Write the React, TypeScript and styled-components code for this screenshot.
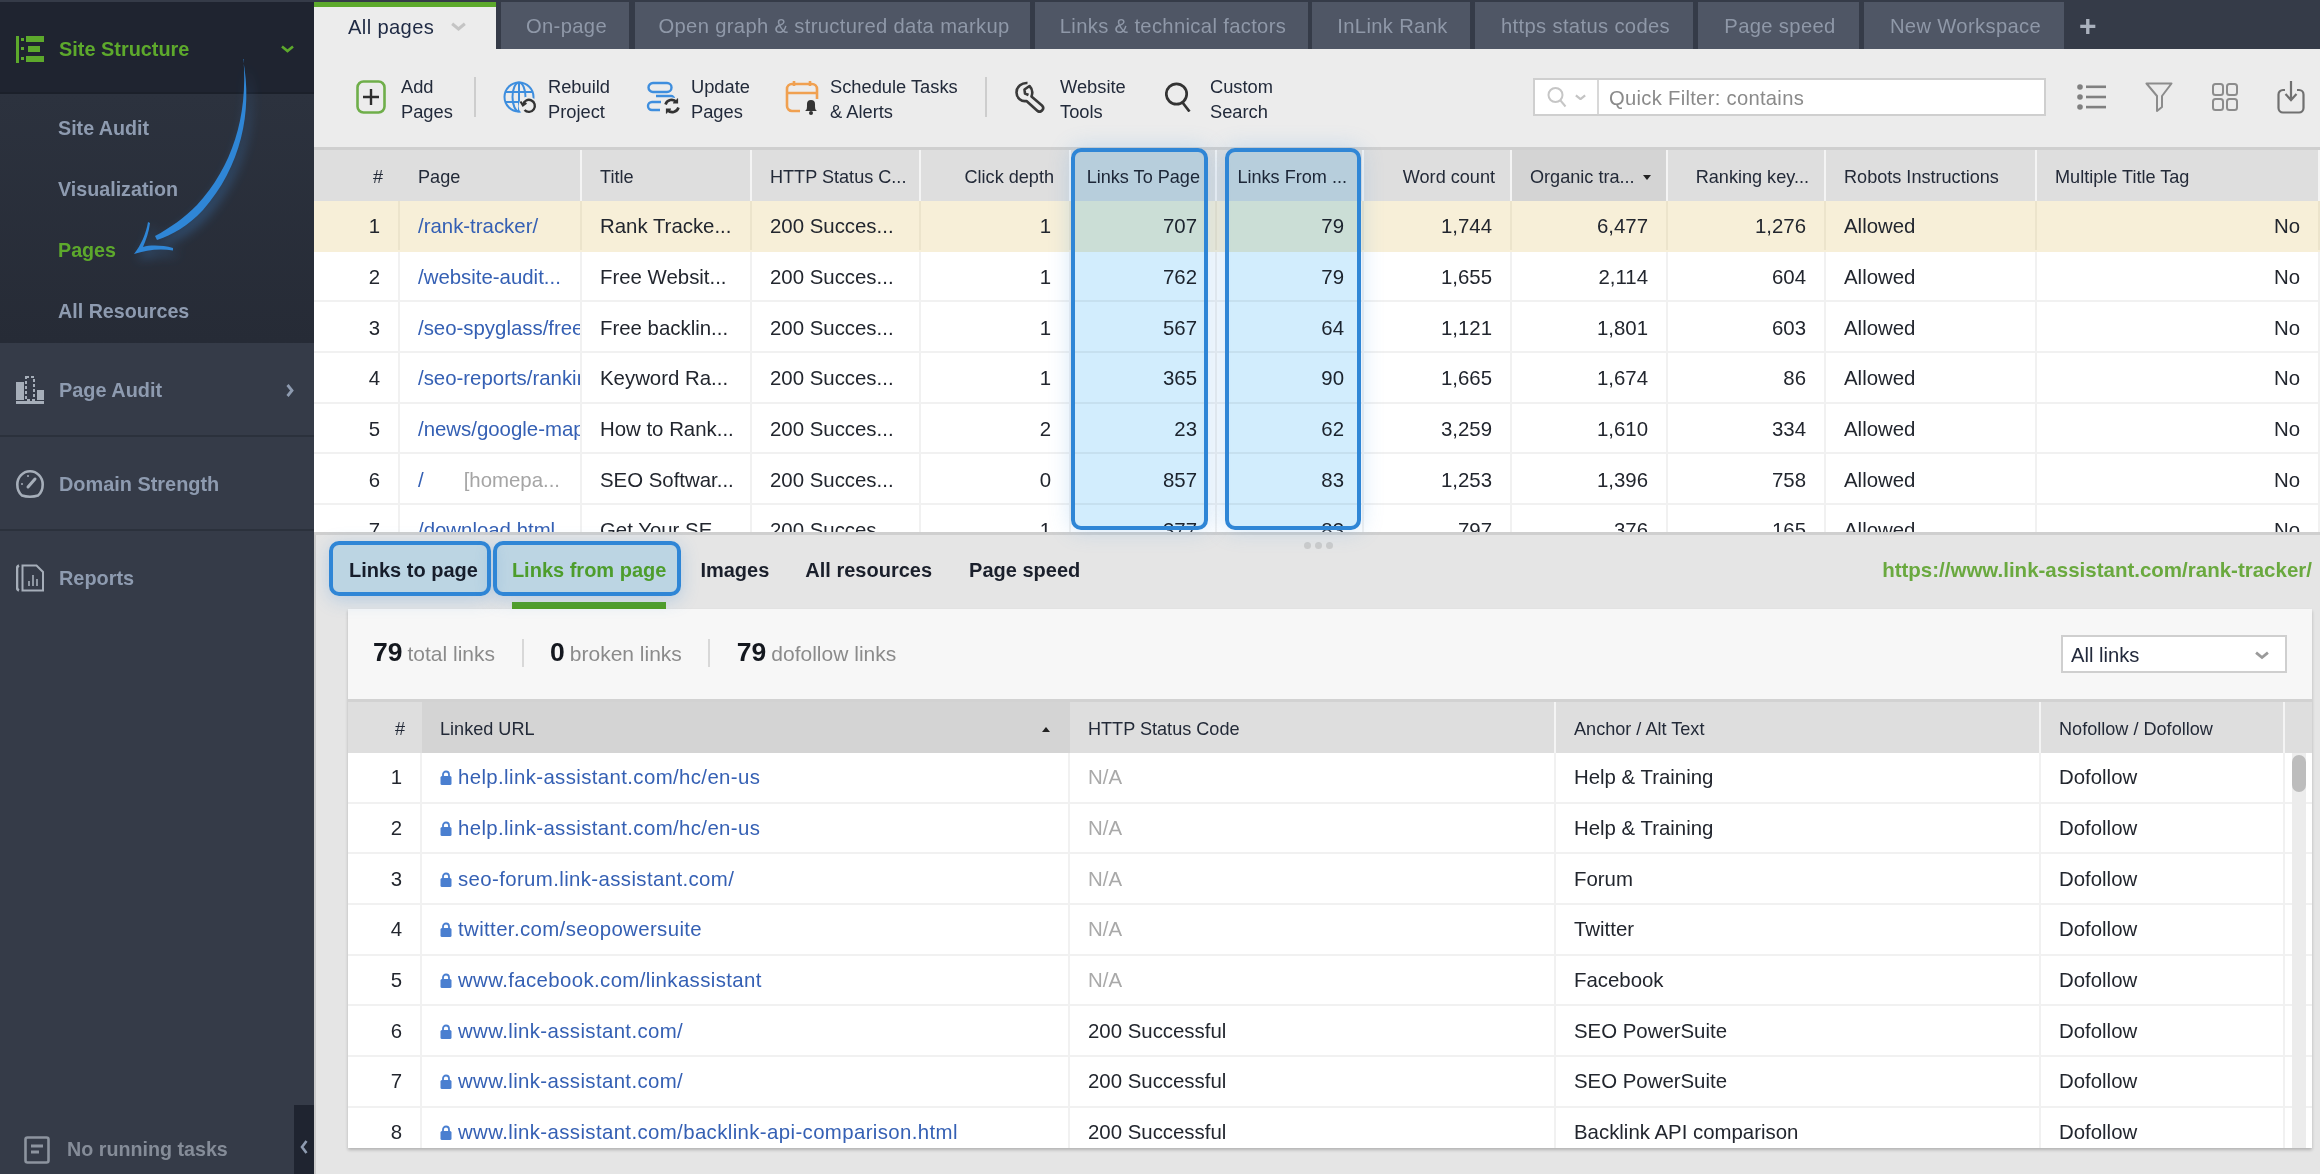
import React from "react";
import styled, { createGlobalStyle } from "styled-components";

const Global = createGlobalStyle`
  html, body { margin: 0; padding: 0; background: #e5e5e5; }
  body { font-family: "Liberation Sans", Arial, sans-serif; color: #1c1c1c; }
  * { box-sizing: border-box; }
`;

const Shell = styled.div`
  display: flex;
  width: 2320px;
  height: 1174px;
  overflow: hidden;
  position: relative;
`;

/* ---------- sidebar ---------- */
const Sidebar = styled.aside`
  width: 314px;
  flex: none;
  background: #353b48;
  border-top: 2px solid #353b48;
  display: flex;
  flex-direction: column;
  position: relative;
`;
const NavHead = styled.div<{ $active?: boolean; $last?: boolean }>`
  height: ${(p) => (p.$active ? "92px" : "94px")};
  flex: none;
  display: flex;
  align-items: center;
  padding: ${(p) => (p.$active ? "4px" : "2px")} 20px 0 16px;
  background: ${(p) => (p.$active ? "#1f2430" : "transparent")};
  color: ${(p) => (p.$active ? "#5da92c" : "#8e9bb0")};
  border-bottom: 2px solid ${(p) => (p.$active ? "#1b202a" : p.$last ? "transparent" : "#2b313c")};
  font-size: 19.9px;
  font-weight: 700;
  svg.ico { width: 28px; height: 28px; margin-right: 15px; flex: none; }
  svg.caret { margin-left: auto; flex: none; }
`;
const SubNav = styled.div`
  height: 249px;
  flex: none;
  padding-top: 4px;
  background: linear-gradient(#2c323e, #262b36);
`;
const SubItem = styled.div<{ $active?: boolean }>`
  height: 61px;
  display: flex;
  align-items: center;
  padding-left: 58px;
  font-size: 19.7px;
  font-weight: 700;
  color: ${(p) => (p.$active ? "#5da92c" : "#8e9bb0")};
`;
const TaskLine = styled.div`
  margin-top: auto;
  height: 69px;
  display: flex;
  align-items: center;
  padding: 20px 0 0 24px;
  color: #858c98;
  font-size: 19.7px;
  font-weight: 700;
  svg { margin-right: 17px; }
`;
const Collapse = styled.div`
  position: absolute;
  right: 0;
  bottom: 0;
  width: 20px;
  height: 69px;
  background: #1f2430;
  color: #8e9bb0;
  display: flex;
  align-items: center;
  justify-content: center;
  padding-top: 14px;
`;
const ArrowLayer = styled.svg`
  position: absolute;
  left: 0;
  top: 0;
  width: 314px;
  height: 300px;
  pointer-events: none;
`;

/* ---------- main ---------- */
const Main = styled.main`
  flex: 1;
  min-width: 0;
  display: flex;
  flex-direction: column;
  position: relative;
`;
const TabBar = styled.div`
  height: 49px;
  flex: none;
  display: flex;
  align-items: stretch;
  padding-top: 2px;
  background: #353b48;
`;
const Tab = styled.div<{ $w: number; $gap: number; $active?: boolean }>`
  width: ${(p) => p.$w}px;
  margin-right: ${(p) => p.$gap}px;
  flex: none;
  display: flex;
  align-items: center;
  justify-content: ${(p) => (p.$active ? "flex-start" : "center")};
  padding: ${(p) => (p.$active ? "0 0 2px 34px" : "1px 0 0 3px")};
  background: ${(p) => (p.$active ? "#ececec" : "#4f5665")};
  border-top: ${(p) => (p.$active ? "5px solid #5da92c" : "0")};
  color: ${(p) => (p.$active ? "#1f2a44" : "#8f98a8")};
  font-size: 20.2px;
  letter-spacing: 0.35px;
  svg { margin-left: 17px; }
`;
const AddTab = styled.div`
  color: #aab1bd;
  font-size: 30px;
  font-weight: 700;
  line-height: 47px;
  margin-left: 15px;
`;
const Toolbar = styled.div`
  height: 101px;
  flex: none;
  display: flex;
  align-items: center;
  padding: 0 0 2px 42px;
  background: #ececec;
  border-bottom: 3px solid #cfcfcf;
`;
const ToolButton = styled.div<{ $w: number }>`
  width: ${(p) => p.$w}px;
  flex: none;
  display: flex;
  align-items: center;
`;
const ToolIcon = styled.span`
  width: 45px;
  flex: none;
  display: flex;
  svg { display: block; }
`;
const ToolLabel = styled.div`
  font-size: 18.3px;
  line-height: 25px;
  padding-top: 3px;
  color: #222a3a;
  white-space: nowrap;
`;
const ToolSep = styled.span<{ $after: number }>`
  width: 2px;
  height: 40px;
  flex: none;
  background: #cdcdcd;
  margin-right: ${(p) => p.$after}px;
`;
const QuickFilter = styled.div`
  width: 513px;
  height: 38px;
  flex: none;
  display: flex;
  background: #fff;
  border: 2px solid #cfcfcf;
`;
const FilterScope = styled.div`
  width: 64px;
  flex: none;
  border-right: 2px solid #d8d8d8;
  display: flex;
  align-items: center;
  justify-content: center;
  gap: 8px;
`;
const FilterInput = styled.div`
  flex: 1;
  display: flex;
  align-items: center;
  padding: 3px 0 0 10px;
  color: #8a8a8a;
  font-size: 20.2px;
  letter-spacing: 0.3px;
`;
const ViewButton = styled.div<{ $w: number; $first?: boolean }>`
  width: ${(p) => p.$w}px;
  margin-left: ${(p) => (p.$first ? 11 : 0)}px;
  flex: none;
  display: flex;
  justify-content: center;
`;

/* ---------- tables ---------- */
const UPPER = "86px 182px 170px 169px 150px 146px 147px 148px 156px 158px 211px 283px";
const LOWER = "74px 648px 486px 485px 244px 1fr";

const HeadRow = styled.div<{ $cols: string; $h: number }>`
  display: grid;
  grid-template-columns: ${(p) => p.$cols};
  height: ${(p) => p.$h}px;
  background: #dedede;
`;
const HeadCell = styled.div<{ $right?: boolean; $sorted?: boolean; $plain?: boolean }>`
  display: flex;
  align-items: center;
  justify-content: ${(p) => (p.$right ? "flex-end" : "flex-start")};
  padding: 3px ${(p) => (p.$right ? "15px" : "18px")} 0 18px;
  gap: 8px;
  background: ${(p) => (p.$sorted ? "#d4d4d4" : "transparent")};
  border-right: 2px solid ${(p) => (p.$plain ? "transparent" : "#f4f4f4")};
  color: #232a38;
  font-size: 18.1px;
  white-space: nowrap;
  overflow: hidden;
`;
const SortDown = styled.span`
  width: 0;
  height: 0;
  margin-left: auto;
  border-left: 4px solid transparent;
  border-right: 4px solid transparent;
  border-top: 5px solid #222;
`;
const SortUp = styled.span`
  width: 0;
  height: 0;
  margin-left: auto;
  border-left: 4px solid transparent;
  border-right: 4px solid transparent;
  border-bottom: 5px solid #222;
`;
const BodyRow = styled.div<{ $cols: string; $selected?: boolean }>`
  display: grid;
  grid-template-columns: ${(p) => p.$cols};
  height: 50.7px;
  background: ${(p) => (p.$selected ? "#f7efd8" : "#fff")};
  border-bottom: 2px solid ${(p) => (p.$selected ? "#f7efd8" : "#f1f1f1")};
  --sep: ${(p) => (p.$selected ? "#ece4cc" : "#f1f1f1")};
`;
const Cell = styled.div<{ $right?: boolean; $link?: boolean; $muted?: boolean }>`
  display: flex;
  align-items: center;
  justify-content: ${(p) => (p.$right ? "flex-end" : "flex-start")};
  padding: 1px 18px 0;
  border-right: 2px solid var(--sep);
  color: ${(p) => (p.$link ? "#3560b4" : p.$muted ? "#a9a9a9" : "#22262e")};
  font-size: 20.4px;
  white-space: nowrap;
  overflow: hidden;
`;
const UpperTable = styled.section`
  height: 382px;
  flex: none;
  overflow: hidden;
  background: #fff;
  ${Cell} { padding-top: 3px; }
`;
const Hint = styled.span`
  color: #a5a5a5;
  margin-left: 40px;
`;

/* ---------- lower panel ---------- */
const LowerPanel = styled.section`
  flex: 1;
  min-height: 0;
  display: flex;
  flex-direction: column;
  background: #e5e5e5;
  border-top: 3px solid #cfcfcf;
  border-left: 2px solid #cbcbcb;
  position: relative;
`;
const LowerTabs = styled.div`
  height: 74px;
  flex: none;
  display: flex;
  align-items: stretch;
  padding: 0 8px 0 33px;
`;
const LowerTab = styled.div<{ $active?: boolean; $gap?: number }>`
  display: flex;
  align-items: center;
  margin-right: ${(p) => p.$gap ?? 34}px;
  padding-top: 4px;
  font-size: 20px;
  font-weight: 700;
  color: ${(p) => (p.$active ? "#5da92c" : "#1a1f2b")};
  border-bottom: 7px solid ${(p) => (p.$active ? "#529f1f" : "transparent")};
`;
const PageUrl = styled.div`
  margin-left: auto;
  display: flex;
  align-items: center;
  padding-bottom: 5px;
  color: #6aa93f;
  font-size: 20.5px;
  font-weight: 700;
`;
const Dots = styled.div`
  position: absolute;
  left: 988px;
  top: 7px;
  display: flex;
  gap: 4px;
  span { width: 7px; height: 7px; border-radius: 50%; background: #cbcbcb; }
`;
const Card = styled.div`
  height: 539px;
  flex: none;
  margin: 0 8px 0 32px;
  background: #fff;
  display: flex;
  flex-direction: column;
  overflow: hidden;
  box-shadow: 0 2px 3px rgba(0, 0, 0, 0.22);
`;
const Summary = styled.div`
  height: 93px;
  flex: none;
  display: flex;
  align-items: center;
  padding: 0 25px;
  background: #f7f7f7;
  border-bottom: 3px solid #d2d2d2;
`;
const Stat = styled.div<{ $last?: boolean }>`
  display: flex;
  align-items: baseline;
  gap: 5px;
  padding-right: 26.5px;
  margin-right: 26.5px;
  border-right: ${(p) => (p.$last ? "0" : "2px solid #d8d8d8")};
  color: #8b8b8b;
  font-size: 21px;
  line-height: 27px;
  margin-top: -3px;
  b { color: #14181f; font-size: 26.5px; }
`;
const LinkSelect = styled.div`
  margin-left: auto;
  width: 226px;
  height: 38px;
  display: flex;
  align-items: center;
  justify-content: space-between;
  padding: 3px 16px 0 8px;
  background: #fff;
  border: 2px solid #cfcfcf;
  font-size: 20.2px;
  color: #232a3c;
`;
const LowerBody = styled.div`
  flex: 1;
  min-height: 0;
  overflow: hidden;
  position: relative;
`;
const UrlText = styled.span`
  margin-left: 6px;
  letter-spacing: 0.38px;
`;
const Scrollbar = styled.div`
  position: absolute;
  right: 6px;
  top: 51px;
  bottom: 0;
  width: 14px;
  background: #ececec;
  &::before {
    content: "";
    position: absolute;
    inset: 2px 0 auto 0;
    height: 37px;
    border-radius: 7px;
    background: #bdbdbd;
  }
`;
const Highlight = styled.div<{ $l: number; $t: number; $w: number; $h: number }>`
  position: absolute;
  left: ${(p) => p.$l}px;
  top: ${(p) => p.$t}px;
  width: ${(p) => p.$w}px;
  height: ${(p) => p.$h}px;
  border: 4px solid #2f86d6;
  border-radius: 10px;
  box-shadow: 0 0 22px rgba(80, 160, 230, 0.25);
  pointer-events: none;
  &::before {
    content: "";
    position: absolute;
    inset: 0;
    border-radius: 6px;
    background: rgb(210, 237, 253);
    mix-blend-mode: multiply;
  }
`;
const TabHighlight = styled(Highlight)`
  box-shadow: 0 4px 18px rgba(60, 140, 215, 0.28);
`;

/* ---------- icons ---------- */
const green = "#5da92c";
const grey = "#8e9bb0";
const lgrey = "#a6aeb9";

const StructureIcon = () => (
  <svg className="ico" viewBox="0 0 28 28" fill={green}>
    <rect x="0" y="1" width="3" height="27" />
    <rect x="5" y="3" width="3" height="3" />
    <rect x="5" y="12" width="3" height="3" />
    <rect x="5" y="22" width="3" height="3" />
    <rect x="10" y="1" width="18" height="6" />
    <rect x="12" y="11" width="12" height="6" />
    <rect x="10" y="21" width="18" height="6" />
  </svg>
);
const AuditIcon = () => (
  <svg className="ico" viewBox="0 0 28 28" fill={lgrey}>
    <rect x="0" y="6" width="8" height="18" />
    <rect x="21" y="14" width="7" height="10" />
    <rect x="0" y="25" width="28" height="3" />
    <rect x="10" y="1" width="8" height="23" fill="none" stroke={lgrey} strokeWidth="2" strokeDasharray="3 2" />
  </svg>
);
const GaugeIcon = () => (
  <svg className="ico" viewBox="0 0 28 28" fill="none" stroke={lgrey} strokeWidth="2.6">
    <path d="M6 25.5C2.8 23 1.3 18.800 1.300 14.500 1.300 7.200 7 1.300 14 1.300s12.700 5.900 12.700 13.200c0 4.300-1.500 8.500-4.700 11 -2.300.8-5 1.200-8 1.200s-5.700-.4-8-1.200z" />
    <path d="M12 17l7-8" strokeWidth="3" strokeLinecap="round" />
    <circle cx="6" cy="14" r="1" fill={lgrey} stroke="none" />
    <circle cx="12" cy="6" r="1" fill={lgrey} stroke="none" />
  </svg>
);
const ReportIcon = () => (
  <svg className="ico" viewBox="0 0 28 28" fill="none" stroke={lgrey} strokeWidth="2">
    <path d="M3 1.500C1.700 2 1 3 1 4.500v19c0 1.500.7 2.500 2 3" strokeWidth="2.600" />
    <path d="M6.500 1.500h14l6.500 6.500v18.500h-20.500z" />
    <path d="M13 22v-5M17 22v-11M21 22v-7" strokeWidth="1.600" />
  </svg>
);
const TaskIcon = () => (
  <svg width="26" height="28" viewBox="0 0 26 28" fill="none" stroke="#8d949f" strokeWidth="2.600">
    <rect x="1.500" y="1.500" width="23" height="25" rx="2" />
    <path d="M7 10h12M7 16h8" strokeWidth="3" />
  </svg>
);
const CaretDown = ({ c = green, w = 13 }: { c?: string; w?: number }) => (
  <svg className="caret" width={w} height={w * 0.62} viewBox="0 0 13 8" fill="none" stroke={c} strokeWidth="2.600">
    <path d="M1 1.500l5.500 4.500 5.500-4.500" />
  </svg>
);
const CaretRight = () => (
  <svg className="caret" width="8" height="13" viewBox="0 0 8 13" fill="none" stroke={grey} strokeWidth="2.800">
    <path d="M1.500 1l4.500 5.500-4.500 5.500" />
  </svg>
);
const AddIcon = () => (
  <svg width="30" height="34" viewBox="0 0 30 34" fill="none">
    <rect x="1.500" y="1.500" width="27" height="31" rx="6" stroke="#6fae4a" strokeWidth="2.600" />
    <path d="M15 9v16M7 17h16" stroke="#2e2e2e" strokeWidth="2.400" />
  </svg>
);
const RebuildIcon = () => (
  <svg width="36" height="36" viewBox="0 -2 36 36" fill="none">
    <g stroke="#3e8ede" strokeWidth="2">
      <circle cx="16" cy="16" r="14.500" />
      <ellipse cx="16" cy="16" rx="6.500" ry="14.500" />
      <path d="M16 1.500v29M2 11h28M2 21h28" />
    </g>
    <circle cx="25" cy="25" r="9.500" fill="#ececec" />
    <path d="M20 23.500a6 6 0 1 1 1.500 5.500" stroke="#333" strokeWidth="2.400" />
    <path d="M17.500 20.500l2.400 4 3.500-2.600" stroke="#333" strokeWidth="2" />
  </svg>
);
const UpdateIcon = () => (
  <svg width="36" height="36" viewBox="0 -2 36 36" fill="none">
    <g stroke="#3e8ede" strokeWidth="2.400">
      <rect x="2.500" y="2" width="23" height="9" rx="4.500" />
      <path d="M10 15h15a3 3 0 0 1 0 6h-1M15 21H6a4 4 0 0 0 0 8h8" />
    </g>
    <circle cx="26" cy="25" r="8.500" fill="#ececec" />
    <path d="M19.500 23.500a6.500 6.500 0 0 1 11-2.500M32.500 26.500a6.500 6.500 0 0 1-11 2.500" stroke="#333" strokeWidth="2.600" />
    <path d="M31.500 17.500v4.500h-4.500M20.500 32.500v-4.500h4.500" fill="#333" stroke="#333" strokeWidth="1.200" />
  </svg>
);
const ScheduleIcon = () => (
  <svg width="36" height="36" viewBox="0 -1 36 36" fill="none">
    <path d="M15 31H7a5 5 0 0 1-5-5V9a5 5 0 0 1 5-5h20a5 5 0 0 1 5 5v10M2 13h30M9 1v5M25 1v5" stroke="#f0a050" strokeWidth="2.600" />
    <path d="M20 31c2-1 2-3 2-7a4 4 0 0 1 8 0c0 4 0 6 2 7z" fill="#333" />
    <circle cx="26" cy="33" r="2" fill="#333" />
  </svg>
);
const WrenchIcon = () => (
  <svg width="30" height="32" viewBox="0 0 30 32" fill="none" stroke="#3a3a3a" strokeWidth="2.600" strokeLinejoin="round">
    <path d="M12.500 2C7 1.500 1.500 5.500 1.500 11.500c0 5.500 5 9.500 10 8.500l10.500 9.500c1.500 1.500 3.500 1.500 5 0s1.500-3.500 0-5L16.500 15.500c1.500-4 .5-8-2-10.500l-5 3.500.5 4 3.500 1.500" />
  </svg>
);
const LensIcon = () => (
  <svg width="26" height="30" viewBox="0 0 26 30" fill="none" stroke="#333" strokeWidth="2.700">
    <circle cx="11.500" cy="12" r="10.200" />
    <path d="M17.500 20.500l7 9" />
  </svg>
);
const SmallLens = () => (
  <svg width="20" height="22" viewBox="0 0 20 22" fill="none" stroke="#c6c6c6" strokeWidth="2">
    <circle cx="8.500" cy="9" r="7" />
    <path d="M13.500 14.500l5 6" />
  </svg>
);
const ListIcon = () => (
  <svg width="30" height="28" viewBox="0 0 30 28" fill="#808080">
    <circle cx="3" cy="4" r="2.800" />
    <circle cx="3" cy="14" r="2.800" />
    <circle cx="3" cy="24" r="2.800" />
    <rect x="9" y="2.500" width="20" height="2.600" />
    <rect x="9" y="12.700" width="20" height="2.600" />
    <rect x="9" y="22.800" width="20" height="2.600" />
  </svg>
);
const FunnelIcon = () => (
  <svg width="28" height="30" viewBox="0 0 28 30" fill="none" stroke="#8c8c8c" strokeWidth="2">
    <path d="M1.500 1.500h25L17 14v11l-5 4V14z" strokeLinejoin="round" />
  </svg>
);
const GridIcon = () => (
  <svg width="26" height="28" viewBox="0 0 26 28" fill="none" stroke="#8c8c8c" strokeWidth="2">
    <rect x="1" y="1" width="10" height="11" rx="2.500" />
    <rect x="15" y="1" width="10" height="11" rx="2.500" />
    <rect x="1" y="16" width="10" height="11" rx="2.500" />
    <rect x="15" y="16" width="10" height="11" rx="2.500" />
  </svg>
);
const SaveIcon = () => (
  <svg width="28" height="34" viewBox="0 0 28 34" fill="none" stroke="#707070" strokeWidth="2.200">
    <path d="M8 10H6a4.500 4.500 0 0 0-4.500 4.500V28A4.500 4.500 0 0 0 6 32.500h16a4.500 4.500 0 0 0 4.500-4.500V14.500A4.500 4.500 0 0 0 22 10h-2" />
    <path d="M14 1v18M8.500 14l5.500 6 5.500-6" />
  </svg>
);
const LockIcon = () => (
  <svg width="12" height="15" viewBox="0 0 12 15" style={{ flex: "none" }}>
    <path d="M3 7V4.500a3 3 0 0 1 6 0V7" fill="none" stroke="#4a7fd0" strokeWidth="1.800" />
    <rect x="0.500" y="6" width="11" height="9" rx="1.500" fill="#4a7fd0" />
  </svg>
);

const Arrow = () => (
  <ArrowLayer viewBox="0 0 314 300">
    <defs>
      <filter id="glow" x="-40%" y="-40%" width="180%" height="180%">
        <feGaussianBlur stdDeviation="6" />
      </filter>
    </defs>
    <g fill="#3f8fe0" opacity="0.45" filter="url(#glow)" transform="translate(4 5)">
      <path d="M243 59C252 110 240 165 203 208 188 224 172 233 157 238L155 234C170 226 184 216 197 203 232 165 248 115 243 59Z" />
      <path d="M148 220C146 232 141 243 134 252 146 248 160 246 173 248L173 246C162 243 150 243 143 245 146 238 149 230 150 221Z" />
    </g>
    <g fill="#2f86d6">
      <path d="M243 57C253 110 241 165 203 208 188 224 172 233 157 238L155 234C170 226 184 216 197 203 232 165 248 115 243.500 57Z" />
      <path d="M148 220C146 232 141 243 134 252 146 248 160 246 173 248.500L173 246C162 243 150 243 143 245 146 238 149 230 150 221Z" />
    </g>
  </ArrowLayer>
);

/* ---------- data ---------- */
const tabs = [
  { t: "On-page", w: 128, g: 6 },
  { t: "Open graph & structured data markup", w: 395, g: 5 },
  { t: "Links & technical factors", w: 273, g: 4 },
  { t: "InLink Rank", w: 158, g: 5 },
  { t: "https status codes", w: 218, g: 5 },
  { t: "Page speed", w: 161, g: 5 },
  { t: "New Workspace", w: 200, g: 0 },
];
const pages: [string, string, string, string, string, string, string, string][] = [
  ["/rank-tracker/", "Rank Tracke...", "1", "707", "79", "1,744", "6,477", "1,276"],
  ["/website-audit...", "Free Websit...", "1", "762", "79", "1,655", "2,114", "604"],
  ["/seo-spyglass/free", "Free backlin...", "1", "567", "64", "1,121", "1,801", "603"],
  ["/seo-reports/ranking", "Keyword Ra...", "1", "365", "90", "1,665", "1,674", "86"],
  ["/news/google-map", "How to Rank...", "2", "23", "62", "3,259", "1,610", "334"],
  ["/", "SEO Softwar...", "0", "857", "83", "1,253", "1,396", "758"],
  ["/download.html", "Get Your SE", "1", "377", "83", "797", "376", "165"],
];
const links = [
  ["help.link-assistant.com/hc/en-us", "N/A", "Help & Training"],
  ["help.link-assistant.com/hc/en-us", "N/A", "Help & Training"],
  ["seo-forum.link-assistant.com/", "N/A", "Forum"],
  ["twitter.com/seopowersuite", "N/A", "Twitter"],
  ["www.facebook.com/linkassistant", "N/A", "Facebook"],
  ["www.link-assistant.com/", "200 Successful", "SEO PowerSuite"],
  ["www.link-assistant.com/", "200 Successful", "SEO PowerSuite"],
  ["www.link-assistant.com/backlink-api-comparison.html", "200 Successful", "Backlink API comparison"],
];

export default function App() {
  return (
    <Shell>
      <Global />
      <Sidebar>
        <NavHead $active>
          <StructureIcon />
          Site Structure
          <CaretDown />
        </NavHead>
        <SubNav>
          <SubItem>Site Audit</SubItem>
          <SubItem>Visualization</SubItem>
          <SubItem $active>Pages</SubItem>
          <SubItem>All Resources</SubItem>
        </SubNav>
        <NavHead>
          <AuditIcon />
          Page Audit
          <CaretRight />
        </NavHead>
        <NavHead>
          <GaugeIcon />
          Domain Strength
        </NavHead>
        <NavHead $last>
          <ReportIcon />
          Reports
        </NavHead>
        <TaskLine>
          <TaskIcon />
          No running tasks
        </TaskLine>
        <Collapse>
          <svg width="8" height="14" viewBox="0 0 8 14" fill="none" stroke={grey} strokeWidth="2.600">
            <path d="M6.500 1L2 7l4.500 6" />
          </svg>
        </Collapse>
        <Arrow />
      </Sidebar>

      <Main>
        <TabBar>
          <Tab $active $w={182} $gap={5}>
            All pages
            <CaretDown c="#c4c4c4" w={15} />
          </Tab>
          {tabs.map((t) => (
            <Tab key={t.t} $w={t.w} $gap={t.g}>
              {t.t}
            </Tab>
          ))}
          <AddTab>+</AddTab>
        </TabBar>

        <Toolbar>
          <ToolButton $w={118}>
            <ToolIcon><AddIcon /></ToolIcon>
            <ToolLabel>Add<br />Pages</ToolLabel>
          </ToolButton>
          <ToolSep $after={27} />
          <ToolButton $w={143}>
            <ToolIcon><RebuildIcon /></ToolIcon>
            <ToolLabel>Rebuild<br />Project</ToolLabel>
          </ToolButton>
          <ToolButton $w={139}>
            <ToolIcon><UpdateIcon /></ToolIcon>
            <ToolLabel>Update<br />Pages</ToolLabel>
          </ToolButton>
          <ToolButton $w={200}>
            <ToolIcon><ScheduleIcon /></ToolIcon>
            <ToolLabel>Schedule Tasks<br />&amp; Alerts</ToolLabel>
          </ToolButton>
          <ToolSep $after={28} />
          <ToolButton $w={150}>
            <ToolIcon><WrenchIcon /></ToolIcon>
            <ToolLabel>Website<br />Tools</ToolLabel>
          </ToolButton>
          <ToolButton $w={368}>
            <ToolIcon><LensIcon /></ToolIcon>
            <ToolLabel>Custom<br />Search</ToolLabel>
          </ToolButton>
          <QuickFilter>
            <FilterScope>
              <SmallLens />
              <CaretDown c="#c4c4c4" w={11} />
            </FilterScope>
            <FilterInput>Quick Filter: contains</FilterInput>
          </QuickFilter>
          <ViewButton $first $w={69}><ListIcon /></ViewButton>
          <ViewButton $w={66}><FunnelIcon /></ViewButton>
          <ViewButton $w={65}><GridIcon /></ViewButton>
          <ViewButton $w={67}><SaveIcon /></ViewButton>
        </Toolbar>

        <UpperTable>
          <HeadRow $cols={UPPER} $h={51}>
            <HeadCell $plain $right>#</HeadCell>
            <HeadCell>Page</HeadCell>
            <HeadCell>Title</HeadCell>
            <HeadCell>HTTP Status C...</HeadCell>
            <HeadCell $right>Click depth</HeadCell>
            <HeadCell $right>Links To Page</HeadCell>
            <HeadCell $right>Links From ...</HeadCell>
            <HeadCell $right>Word count</HeadCell>
            <HeadCell $sorted>Organic tra...<SortDown /></HeadCell>
            <HeadCell $right>Ranking key...</HeadCell>
            <HeadCell>Robots Instructions</HeadCell>
            <HeadCell>Multiple Title Tag</HeadCell>
          </HeadRow>
          {pages.map((r, i) => (
            <BodyRow key={i} $cols={UPPER} $selected={i === 0}>
              <Cell $right>{i + 1}</Cell>
              <Cell $link>
                {r[0]}
                {r[0] === "/" && <Hint>[homepa...</Hint>}
              </Cell>
              <Cell>{r[1]}</Cell>
              <Cell>200 Succes...</Cell>
              <Cell $right>{r[2]}</Cell>
              <Cell $right>{r[3]}</Cell>
              <Cell $right>{r[4]}</Cell>
              <Cell $right>{r[5]}</Cell>
              <Cell $right>{r[6]}</Cell>
              <Cell $right>{r[7]}</Cell>
              <Cell>Allowed</Cell>
              <Cell $right>No</Cell>
            </BodyRow>
          ))}
        </UpperTable>

        <LowerPanel>
          <Dots><span /><span /><span /></Dots>
          <LowerTabs>
            <LowerTab>Links to page</LowerTab>
            <LowerTab $active>Links from page</LowerTab>
            <LowerTab $gap={36}>Images</LowerTab>
            <LowerTab $gap={37}>All resources</LowerTab>
            <LowerTab>Page speed</LowerTab>
            <PageUrl>https://www.link-assistant.com/rank-tracker/</PageUrl>
          </LowerTabs>
          <Card>
            <Summary>
              <Stat><b>79</b> total links</Stat>
              <Stat><b>0</b> broken links</Stat>
              <Stat $last><b>79</b> dofollow links</Stat>
              <LinkSelect>
                All links
                <CaretDown c="#9a9a9a" w={14} />
              </LinkSelect>
            </Summary>
            <LowerBody>
              <HeadRow $cols={LOWER} $h={51}>
                <HeadCell $plain $right>#</HeadCell>
                <HeadCell $sorted $plain>Linked URL<SortUp /></HeadCell>
                <HeadCell>HTTP Status Code</HeadCell>
                <HeadCell>Anchor / Alt Text</HeadCell>
                <HeadCell>Nofollow / Dofollow</HeadCell>
                <HeadCell $plain />
              </HeadRow>
              {links.map((r, i) => (
                <BodyRow key={i} $cols={LOWER}>
                  <Cell $right>{i + 1}</Cell>
                  <Cell $link><LockIcon /><UrlText>{r[0]}</UrlText></Cell>
                  <Cell $muted={r[1] === "N/A"}>{r[1]}</Cell>
                  <Cell>{r[2]}</Cell>
                  <Cell>Dofollow</Cell>
                </BodyRow>
              ))}
              <Scrollbar />
            </LowerBody>
          </Card>
        </LowerPanel>

        <Highlight $l={757} $t={148} $w={137} $h={382} />
        <Highlight $l={911} $t={148} $w={136} $h={382} />
        <TabHighlight $l={15} $t={541} $w={162} $h={55} />
        <TabHighlight $l={179} $t={541} $w={188} $h={55} />
      </Main>
    </Shell>
  );
}
